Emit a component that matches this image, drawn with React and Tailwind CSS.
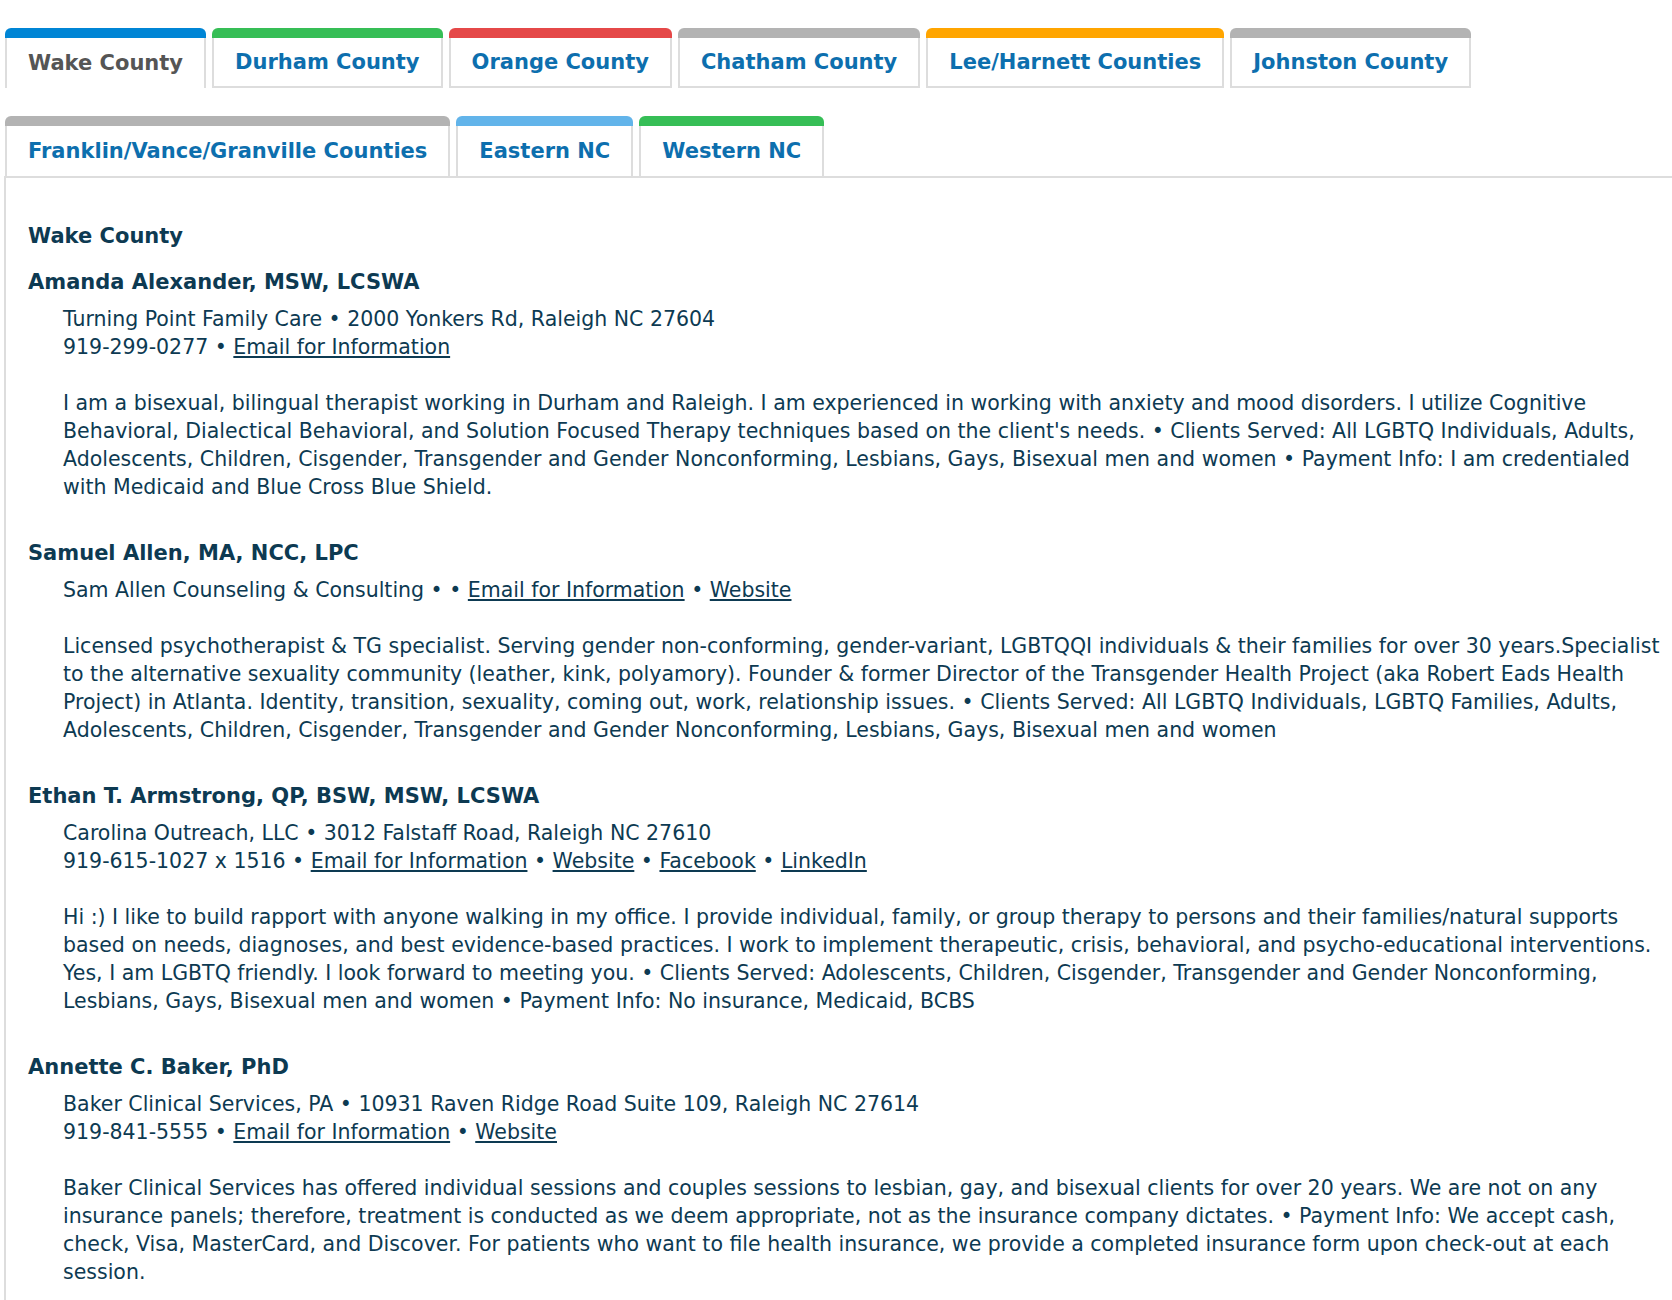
import React from "react";

const tabsRow = [
  { label: "Wake County", bar: "bg-[#0085d5]", active: true },
  { label: "Durham County", bar: "bg-[#36be56]" },
  { label: "Orange County", bar: "bg-[#e54848]" },
  { label: "Chatham County", bar: "bg-[#b3b3b3]" },
  { label: "Lee/Harnett Counties", bar: "bg-[#ffa500]" },
  { label: "Johnston County", bar: "bg-[#b3b3b3]" },
  { label: "Franklin/Vance/Granville Counties", bar: "bg-[#b3b3b3]", last: true },
  { label: "Eastern NC", bar: "bg-[#62b4ea]", last: true },
  { label: "Western NC", bar: "bg-[#36be56]", last: true },
];

function Tab({ label, bar, active, last }) {
  return (
    <div className="flex flex-col h-[60px]">
      <div className={`h-[10px] rounded-t-[6px] ${bar}`} />
      <div
        className={`flex-1 flex items-center px-[21px] bg-white border-x-2 border-[#dddddd] ${
          active || last ? "" : "border-b-2"
        }`}
      >
        <span
          className={`text-[21px] font-bold leading-none ${
            active ? "text-[#555555]" : "text-[#0d6fae]"
          }`}
        >
          {label}
        </span>
      </div>
    </div>
  );
}

const A = ({ children }) => (
  <a href="#" className="underline">
    {children}
  </a>
);

const entries = [
  {
    name: "Amanda Alexander, MSW, LCSWA",
    lines: [
      <>Turning Point Family Care • 2000 Yonkers Rd, Raleigh NC 27604</>,
      <>
        919-299-0277 • <A>Email for Information</A>
      </>,
    ],
    desc:
      "I am a bisexual, bilingual therapist working in Durham and Raleigh. I am experienced in working with anxiety and mood disorders. I utilize Cognitive Behavioral, Dialectical Behavioral, and Solution Focused Therapy techniques based on the client's needs. • Clients Served: All LGBTQ Individuals, Adults, Adolescents, Children, Cisgender, Transgender and Gender Nonconforming, Lesbians, Gays, Bisexual men and women • Payment Info: I am credentialed with Medicaid and Blue Cross Blue Shield.",
  },
  {
    name: "Samuel Allen, MA, NCC, LPC",
    lines: [
      <>
        Sam Allen Counseling &amp; Consulting • • <A>Email for Information</A> •{" "}
        <A>Website</A>
      </>,
    ],
    desc:
      "Licensed psychotherapist & TG specialist. Serving gender non-conforming, gender-variant, LGBTQQI individuals & their families for over 30 years.Specialist to the alternative sexuality community (leather, kink, polyamory). Founder & former Director of the Transgender Health Project (aka Robert Eads Health Project) in Atlanta. Identity, transition, sexuality, coming out, work, relationship issues. • Clients Served: All LGBTQ Individuals, LGBTQ Families, Adults, Adolescents, Children, Cisgender, Transgender and Gender Nonconforming, Lesbians, Gays, Bisexual men and women",
  },
  {
    name: "Ethan T. Armstrong, QP, BSW, MSW, LCSWA",
    lines: [
      <>Carolina Outreach, LLC • 3012 Falstaff Road, Raleigh NC 27610</>,
      <>
        919-615-1027 x 1516 • <A>Email for Information</A> • <A>Website</A> •{" "}
        <A>Facebook</A> • <A>LinkedIn</A>
      </>,
    ],
    desc:
      "Hi :) I like to build rapport with anyone walking in my office. I provide individual, family, or group therapy to persons and their families/natural supports based on needs, diagnoses, and best evidence-based practices. I work to implement therapeutic, crisis, behavioral, and psycho-educational interventions. Yes, I am LGBTQ friendly. I look forward to meeting you. • Clients Served: Adolescents, Children, Cisgender, Transgender and Gender Nonconforming, Lesbians, Gays, Bisexual men and women • Payment Info: No insurance, Medicaid, BCBS",
  },
  {
    name: "Annette C. Baker, PhD",
    lines: [
      <>Baker Clinical Services, PA • 10931 Raven Ridge Road Suite 109, Raleigh NC 27614</>,
      <>
        919-841-5555 • <A>Email for Information</A> • <A>Website</A>
      </>,
    ],
    desc:
      "Baker Clinical Services has offered individual sessions and couples sessions to lesbian, gay, and bisexual clients for over 20 years. We are not on any insurance panels; therefore, treatment is conducted as we deem appropriate, not as the insurance company dictates. • Payment Info: We accept cash, check, Visa, MasterCard, and Discover. For patients who want to file health insurance, we provide a completed insurance form upon check-out at each session.",
  },
];

export default function App() {
  return (
    <div
      className="bg-white min-h-[1300px] overflow-x-hidden text-[#0d3a52]"
      style={{ fontFamily: '"DejaVu Sans", Verdana, sans-serif' }}
    >
      <div className="flex flex-wrap gap-x-[6px] gap-y-[28px] pl-[5px] pt-[28px]">
        {tabsRow.map((t) => (
          <Tab key={t.label} {...t} />
        ))}
      </div>
      <div className="ml-[4px] border-l-2 border-t-2 border-[#dddddd] pl-[22px] pt-[44px] pb-[40px]">
        <h2 className="text-[21px] font-bold leading-[28px] mb-[18px]">Wake County</h2>
        <div className="flex flex-col gap-[38px]">
          {entries.map((e) => (
            <div key={e.name}>
              <h3 className="text-[21px] font-bold leading-[28px] mb-[9px]">{e.name}</h3>
              <div className="ml-[35px] text-[20.5px] leading-[28px]">
                {e.lines.map((l, i) => (
                  <div key={i}>{l}</div>
                ))}
                <p className="mt-[28px]">{e.desc}</p>
              </div>
            </div>
          ))}
        </div>
      </div>
    </div>
  );
}
